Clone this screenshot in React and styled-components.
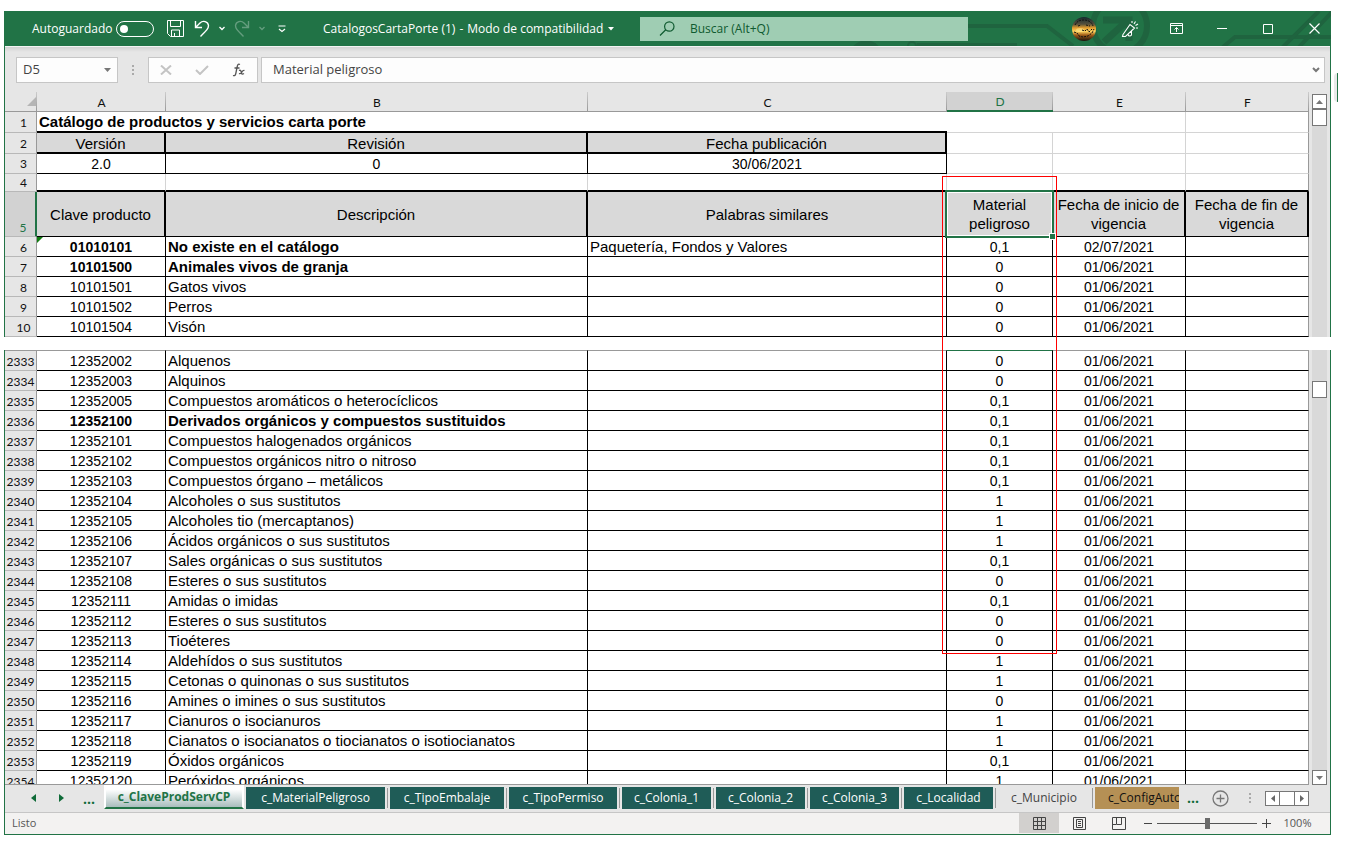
import React from "react";
import styled, { createGlobalStyle, css } from "styled-components";

const green = "#217346";
const uiFont = '"Open Sans", "Noto Sans", sans-serif';
const cellFont = '"Liberation Sans", Arial, sans-serif';
const headFont = 'Lato, "Open Sans", sans-serif';

const GlobalStyle = createGlobalStyle`
  *, *::before, *::after { box-sizing: border-box; }
  body { margin: 0; background: #fff; font-family: ${uiFont}; }
  button, input { font: inherit; color: inherit; }
  button { border: 0; padding: 0; background: none; display: inline-flex; align-items: center; justify-content: center; }
  svg { display: block; flex: none; }
`;

const Page = styled.div`
  height: 100vh;
  min-height: 600px;
  min-width: 1180px;
  padding: 11px 18px 15px 4px;
  display: flex;
`;

const Shell = styled.div`
  position: relative;
  flex: 1;
  min-width: 0;
  display: flex;
  flex-direction: column;
  gap: 13px;
`;

const UpperPart = styled.section`
  flex: none;
  border: solid ${green};
  border-width: 0 1px;
  background: #e6e6e6;
`;

const LowerPart = styled.section`
  flex: 1;
  min-height: 0;
  display: flex;
  flex-direction: column;
  border: solid ${green};
  border-width: 0 1px 1px;
  background: #e6e6e6;
`;

/* ---------- title bar ---------- */

const TitleBar = styled.header`
  position: relative;
  display: flex;
  align-items: center;
  height: 35px;
  margin: 0 -1px;
  background: ${green};
  color: #fff;
  font-size: 12px;
  line-height: 16px;
`;

const TitlePattern = styled.svg`
  position: absolute;
  right: 0;
  top: 0;
`;

const QuickAccess = styled.div`
  display: flex;
  align-items: center;
  width: 319px;
  flex: none;
  padding-left: 28px;
`;

const AutoSave = styled.label`
  display: flex;
  align-items: center;
  gap: 4px;
  margin-right: 11px;
`;

const Switch = styled.input`
  appearance: none;
  margin: 0;
  width: 38px;
  height: 16px;
  border: 1px solid #fff;
  border-radius: 8px;
  display: flex;
  align-items: center;
  padding-left: 3px;
  &::before {
    content: "";
    width: 8px;
    height: 8px;
    border-radius: 50%;
    background: #fff;
  }
`;

const QuickButton = styled.button`
  width: ${(p) => p.$w}px;
  height: 24px;
  opacity: ${(p) => (p.disabled ? 0.3 : 1)};
`;

const FileName = styled.div`
  display: flex;
  align-items: center;
  gap: 4px;
  width: 317px;
  flex: none;
  white-space: nowrap;
`;

const Search = styled.label`
  display: flex;
  align-items: center;
  position: relative;
  flex: 0 1 328px;
  height: 24px;
  padding-left: 19px;
  gap: 14px;
  background: #9fcdb3;
  color: #0f5a30;
`;

const SearchInput = styled.input`
  flex: 1;
  min-width: 0;
  border: 0;
  padding: 0;
  background: transparent;
  outline: 0;
  &::placeholder { color: #0f5a30; opacity: 1; }
`;

const WindowButtons = styled.div`
  display: flex;
  gap: 12px;
  margin-left: auto;
  position: relative;
`;

const WindowButton = styled.button`
  width: 34px;
  height: 34px;
`;

/* ---------- formula bar ---------- */

const FormulaBar = styled.div`
  display: flex;
  height: 46px;
  padding: 10px 5px 9px 11px;
  border-top: 1px solid #f3f3f3;
  background: linear-gradient(#d2d2d2, #e6e6e6 5px);
  color: #444;
  font-size: 13px;
`;

const Box = styled.div`
  display: flex;
  align-items: center;
  height: 26px;
  border: 1px solid #c6c6c6;
  background: #fdfdfd;
`;

const NameBox = styled(Box)`
  width: 102px;
  padding: 0 6px;
`;

const Grip = styled.span`
  width: 30px;
  display: flex;
  align-items: center;
  justify-content: center;
  height: 26px;
`;

const EntryButtons = styled(Box)`
  width: 110px;
  margin-right: 3px;
  justify-content: space-around;
`;

const FormulaBox = styled(Box)`
  flex: 1;
  padding: 0 4px 0 11px;
`;

const PlainInput = styled.input`
  flex: 1;
  width: 40px;
  min-width: 0;
  border: 0;
  padding: 0 0 2px;
  outline: 0;
  background: transparent;
`;

/* ---------- sheet ---------- */

const Pane = styled.div`
  display: flex;
  min-height: 0;
  ${(p) =>
    p.$fill &&
    css`
      flex: 1;
    `}
`;

const GridArea = styled.div`
  flex: 1;
  min-width: 0;
  overflow: ${(p) => (p.$clip ? "hidden" : "visible")};
  border-bottom: ${(p) => (p.$clip ? "1px solid #999" : "0")};
`;

const Sheet = styled.table`
  width: 100%;
  table-layout: fixed;
  border-collapse: separate;
  border-spacing: 0;
  background: #fff;
  color: #000;
`;

const Row = styled.tr`
  height: ${(p) => p.$h || 20}px;
`;

const ColumnHead = styled.th`
  height: 20px;
  padding: 2px 0 0;
  font: 12px/16px ${headFont};
  color: ${(p) => (p.$selected ? green : "#111")};
  border-bottom: ${(p) => (p.$selected ? `2px solid ${green}` : "1px solid #999")};
  background: linear-gradient(#ccc, #999) right / 1px 100% no-repeat
    ${(p) => (p.$selected ? "#d2d2d2" : "#e6e6e6")};
`;

const SelectAll = styled(ColumnHead)`
  padding: 0;
  & > svg { margin: 0 1px 0 auto; }
`;

const RowHead = styled.th`
  padding: 0 0 0 ${(p) => (p.$wide ? 0 : 6)}px;
  font: 12px/17px ${headFont};
  line-height: ${(p) => (p.$tall ? 19 : 17)}px;
  text-align: center;
  vertical-align: bottom;
  color: ${(p) => (p.$selected ? green : "#111")};
  background: ${(p) => (p.$selected ? "#d2d2d2" : "#e6e6e6")};
  border-bottom: 1px solid #b8b8b8;
  border-right: ${(p) => (p.$selected ? `2px solid ${green}` : "1px solid #999")};
  ${(p) => p.$first && "border-top: 1px solid #999;"}
`;

const lineStyles = {
  thin: "1px solid #000",
  thick: "2px solid #000",
  grid: "1px solid #d4d4d4",
  edge: "1px solid #999",
  none: "0",
};

const Cell = styled.td`
  position: relative;
  padding: ${(p) => (p.$num ? 1 : 0)}px 2px 0;
  font-family: ${cellFont};
  font-size: ${(p) => (p.$num ? 14 : 15)}px;
  line-height: ${(p) => (p.$num ? 18 : 19)}px;
  font-weight: ${(p) => (p.$bold ? 700 : 400)};
  text-align: ${(p) => (p.$left ? "left" : "center")};
  white-space: ${(p) => (p.$wrap ? "normal" : "nowrap")};
  background: ${(p) => (p.$shade ? "#d9d9d9" : "#fff")};
  border-right: ${(p) => lineStyles[p.$r || "thin"]};
  border-bottom: ${(p) => lineStyles[p.$b || "thin"]};
  ${(p) => p.$first && `border-top: 1px solid ${p.$first};`}
`;

const VersionHead = styled(Cell)`
  padding-top: 2px;
  line-height: 17px;
`;

const SelectionFrame = styled.span`
  position: absolute;
  inset: -2px;
  z-index: 1;
  border: 2px solid ${green};
  box-shadow: inset 0 0 0 1px #fff;
  &::after {
    content: "";
    position: absolute;
    right: -4px;
    bottom: -4px;
    width: 7px;
    height: 7px;
    border: 1px solid #fff;
    background: ${green};
  }
`;

const ErrorMark = styled.span`
  position: absolute;
  left: 0;
  top: 0;
  border-top: 6px solid #107c10;
  border-right: 6px solid transparent;
`;

const Highlight = styled.div`
  position: absolute;
  z-index: 2;
  top: 165px;
  right: 274px;
  width: 115px;
  height: 478px;
  border: 1px solid #f00;
  pointer-events: none;
`;

const EdgeMark = styled.div`
  position: absolute;
  right: -7px;
  top: 62px;
  width: 4px;
  height: 29px;
  border-right: 1px solid ${green};
  border-radius: 4px 0 0 4px;
  background: #e9e9e9;
`;

const ScrollColumn = styled.div`
  width: 21px;
  padding: ${(p) => p.$top}px 3px 0;
  display: flex;
  flex-direction: column;
`;

const Track = styled.div`
  flex: 1;
  background: #d9d9d9;
  padding-top: ${(p) => p.$top || 0}px;
`;

const Thumb = styled.div`
  width: 15px;
  height: 17px;
  border: 1px solid #777;
  background: #fff;
`;

const ScrollButton = styled.button`
  width: 15px;
  height: 15px;
  border: 1px solid #777;
  background: #fff;
  flex: none;
`;

/* ---------- sheet tabs ---------- */

const TabBar = styled.nav`
  flex: none;
  height: 28px;
  display: flex;
  align-items: flex-start;
  border-bottom: 1px solid #c6c6c6;
  color: #0f6b38;
  font-size: 12px;
`;

const TabArrows = styled.div`
  display: flex;
  align-items: center;
  width: 99px;
  height: 26px;
  padding-left: 14px;
`;

const TabArrow = styled.button`
  width: 28px;
  height: 20px;
`;

const MoreTabs = styled.button`
  width: 28px;
  height: 24px;
  font-size: 14px;
  font-weight: 700;
`;

const ActiveTab = styled.button`
  width: 140px;
  height: 24px;
  margin-right: 2px;
  border: 2px solid #fff;
  border-top: 0;
  border-bottom: 2px solid ${green};
  background: linear-gradient(#fff 20%, #a9bdbd);
  color: ${green};
  font-weight: 700;
`;

const Tab = styled.button`
  width: ${(p) => p.$w}px;
  height: 22px;
  margin-top: 2px;
  padding-bottom: 2px;
  background: ${(p) => p.$bg || "#1f5c57"};
  color: ${(p) => p.$fg || "#fff"};
  white-space: nowrap;
  overflow: hidden;
  flex: none;
  ${(p) => p.$cut && "justify-content: flex-start; padding-left: 13px;"}
`;

const TabRule = styled.span`
  width: 1px;
  height: 20px;
  margin: 3px 2px 0;
  background: #999;
`;

const TabTools = styled.div`
  margin-left: auto;
  margin-right: 21px;
  display: flex;
  align-items: center;
  height: 26px;
`;

const AddSheet = styled.button`
  width: 20px;
  height: 20px;
  margin-right: 5px;
`;

const HScroll = styled.div`
  display: flex;
  & > * + * { margin-left: -1px; }
`;

const HThumb = styled.div`
  width: 16px;
  height: 15px;
  border: 1px solid #777;
  background: #fff;
`;

/* ---------- status bar ---------- */

const StatusBar = styled.footer`
  flex: none;
  height: 21px;
  display: flex;
  align-items: center;
  padding: 0 0 1px 7px;
  background: #f3f2f1;
  color: #555;
  font-size: 11px;
`;

const StatusText = styled.span`
  padding-bottom: 1px;
`;

const ViewButtons = styled.div`
  display: flex;
  margin-left: auto;
`;

const ViewButton = styled.button`
  width: 40px;
  height: 20px;
  background: ${(p) => (p.$on ? "#d2d0ce" : "transparent")};
`;

const ZoomButton = styled.button`
  width: 18px;
  height: 20px;
`;

const ZoomSlider = styled.input`
  appearance: none;
  width: 100px;
  height: 16px;
  margin: 0;
  background: linear-gradient(#555, #555) center / 100% 1px no-repeat;
  &::-webkit-slider-thumb {
    appearance: none;
    width: 5px;
    height: 11px;
    background: #6b6b6b;
  }
`;

const ZoomValue = styled.button`
  width: 55px;
  height: 20px;
  padding: 0 10px 1px 0;
`;

/* ---------- small drawings ---------- */

const Line = ({ w = 16, h = 16, d, color = "currentColor", sw = 1, ...rest }) => (
  <svg width={w} height={h} viewBox={`0 0 ${w} ${h}`} fill="none" stroke={color} strokeWidth={sw} {...rest}>
    <path d={d} />
  </svg>
);

const Solid = ({ w, h, d, color = "currentColor" }) => (
  <svg width={w} height={h} viewBox={`0 0 ${w} ${h}`} fill={color}>
    <path d={d} />
  </svg>
);

const Dots = () => (
  <svg width="2" height="11" fill="#aaa">
    <rect width="2" height="2" y="0" />
    <rect width="2" height="2" y="4" />
    <rect width="2" height="2" y="8" />
  </svg>
);

const Avatar = () => (
  <svg width="24" height="24" viewBox="0 0 24 24">
    <defs>
      <linearGradient id="sunset" x1="0" y1="0" x2="0" y2="1">
        <stop offset="0" stopColor="#14282f" />
        <stop offset="0.3" stopColor="#55503c" />
        <stop offset="0.45" stopColor="#e09a2c" />
        <stop offset="0.6" stopColor="#ffd460" />
        <stop offset="0.75" stopColor="#a05c18" />
        <stop offset="1" stopColor="#17100c" />
      </linearGradient>
    </defs>
    <circle cx="12" cy="12" r="12" fill="url(#sunset)" />
    <ellipse cx="8" cy="13" rx="4" ry="2" fill="#ffef9a" opacity="0.5" />
    <path
      d="M3 8c2-4 5-5 9-5s8 2 9 6M2 15l3 1 2 3 4 1 5-1 4-3 2-4M6 9l3-1M14 8l4 1M10 13l3 1 2-2 2 3 3-3"
      stroke="#111"
      strokeDasharray="2 1"
      fill="none"
    />
  </svg>
);

const Backdrop = () => (
  <TitlePattern width="480" height="35" viewBox="0 0 480 35" fill="none" stroke="#1f643f" strokeWidth="4" aria-hidden="true">
    <circle cx="15" cy="47" r="15" strokeWidth="5" />
    <path d="M7 34h18" />
    <circle cx="61" cy="35" r="4" strokeWidth="2" />
    <path d="M66 34h100" />
    <path d="M100 15h96l26 20" />
    <circle cx="269" cy="15" r="27" strokeWidth="6" />
    <path d="M252 9h26v21M277 9l-24 22" strokeWidth="7" />
    <path d="M372 36l12-10h98" />
    <path d="M432 36l36-36M448 36l34-36" />
  </TitlePattern>
);

/* ---------- data ---------- */

const columns = ["A", "B", "C", "D", "E", "F"];

const topRows = [
  [6, "01010101", "No existe en el catálogo", "Paquetería, Fondos y Valores", "0,1", "02/07/2021", true],
  [7, "10101500", "Animales vivos de granja", "", "0", "01/06/2021", true],
  [8, "10101501", "Gatos vivos", "", "0", "01/06/2021"],
  [9, "10101502", "Perros", "", "0", "01/06/2021"],
  [10, "10101504", "Visón", "", "0", "01/06/2021"],
];

const lowerRows = [
  ["12352002", "Alquenos", "0"],
  ["12352003", "Alquinos", "0"],
  ["12352005", "Compuestos aromáticos o heterocíclicos", "0,1"],
  ["12352100", "Derivados orgánicos y compuestos sustituidos", "0,1", true],
  ["12352101", "Compuestos halogenados orgánicos", "0,1"],
  ["12352102", "Compuestos orgánicos nitro o nitroso", "0,1"],
  ["12352103", "Compuestos órgano – metálicos", "0,1"],
  ["12352104", "Alcoholes o sus sustitutos", "1"],
  ["12352105", "Alcoholes tio (mercaptanos)", "1"],
  ["12352106", "Ácidos orgánicos o sus sustitutos", "1"],
  ["12352107", "Sales orgánicas o sus sustitutos", "0,1"],
  ["12352108", "Esteres o sus sustitutos", "0"],
  ["12352111", "Amidas o imidas", "0,1"],
  ["12352112", "Esteres o sus sustitutos", "0"],
  ["12352113", "Tioéteres", "0"],
  ["12352114", "Aldehídos o sus sustitutos", "1"],
  ["12352115", "Cetonas o quinonas o sus sustitutos", "1"],
  ["12352116", "Amines o imines o sus sustitutos", "0"],
  ["12352117", "Cianuros o isocianuros", "1"],
  ["12352118", "Cianatos o isocianatos o tiocianatos o isotiocianatos", "1"],
  ["12352119", "Óxidos orgánicos", "0,1"],
  ["12352120", "Peróxidos orgánicos", "1"],
].map(([code, text, risk, bold], i) => [2333 + i, code, text, "", risk, "01/06/2021", bold]);

const tabs = [
  ["c_MaterialPeligroso", 139],
  ["c_TipoEmbalaje", 114],
  ["c_TipoPermiso", 108],
  ["c_Colonia_1", 89],
  ["c_Colonia_2", 89],
  ["c_Colonia_3", 89],
  ["c_Localidad", 89],
];

const Column = styled.col`
  width: ${(p) => (p.$w ? `${p.$w}px` : "auto")};
`;

const Columns = () => (
  <colgroup>
    <Column $w={32} />
    <Column $w={129} />
    <Column />
    <Column $w={359} />
    <Column $w={106} />
    <Column $w={133} />
    <Column $w={123} />
  </colgroup>
);

const DataRow = ({ row, first }) => {
  const [n, code, text, similar, risk, date, bold] = row;
  const top = first ? "#999" : undefined;
  return (
    <Row $h={first ? 21 : 20}>
      <RowHead scope="row" $wide={n > 999} $first={first}>{n}</RowHead>
      <Cell $num $bold={bold} $first={top}>
        {n === 6 && <ErrorMark />}
        {code}
      </Cell>
      <Cell $left $bold={bold} $first={top}>{text}</Cell>
      <Cell $left $first={top}>{similar}</Cell>
      <Cell $num $first={first ? green : undefined}>{risk}</Cell>
      <Cell $num $first={top}>{date}</Cell>
      <Cell $r="edge" $first={top} />
    </Row>
  );
};

export default function App() {
  return (
    <Page>
      <GlobalStyle />
      <Shell>
        <UpperPart>
          <TitleBar>
            <Backdrop />
            <QuickAccess>
              <AutoSave>
                Autoguardado
                <Switch type="checkbox" role="switch" />
              </AutoSave>
              <QuickButton $w={20} aria-label="Guardar">
                <Line w={17} h={17} d="M.5.5h16v16h-13l-3-3zM3.5.5v6h10v-6M4.500 16v-6h8v6M7.500 16v-3" />
              </QuickButton>
              <QuickButton $w={34} aria-label="Deshacer">
                <Line w={16} h={18} sw={1.4} d="M1.500 1v6.500h6.500M1.500 7.500L6 3c3-3 8-1.500 8.500 2.500c0 3-1.500 4.500-8 11" />
              </QuickButton>
              <Line w={6} h={5} d="M.5 1l2.500 2.500L5.500 1" sw={1.3} />
              <QuickButton $w={34} disabled aria-label="Rehacer">
                <Line w={16} h={18} sw={1.4} d="M14.500 1v6.500h-6.500M14.500 7.500L10 3c-3-3-8-1.500-8.500 2.500c0 3 1.500 4.500 8 11" />
              </QuickButton>
              <Line w={6} h={5} d="M.5 1l2.500 2.500L5.500 1" sw={1.3} opacity="0.3" />
              <QuickButton $w={34} aria-label="Personalizar barra">
                <Line w={8} h={8} sw={1.2} d="M.5 1h7M1 4l3 2.500L7 4" />
              </QuickButton>
            </QuickAccess>
            <FileName>
              <span>CatalogosCartaPorte (1)</span>
              <span>-</span>
              <span>Modo de compatibilidad</span>
              <QuickButton $w={8} aria-label="Opciones del archivo">
                <Solid w={6} h={4} d="M0 0h6L3 3.500z" />
              </QuickButton>
            </FileName>
            <Search>
              <Line w={17} h={16} sw={1.2} d="M6.500 9L1 14.500M15 5.500a4.700 4.700 0 1 1-9.400 0a4.700 4.700 0 1 1 9.400 0" />
              <SearchInput type="text" placeholder="Buscar (Alt+Q)" aria-label="Buscar" />
            </Search>
            <WindowButtons>
              <WindowButton aria-label="Cuenta"><Avatar /></WindowButton>
              <WindowButton aria-label="Novedades">
                <Line w={18} h={18} sw={1.1} d="M2 14.500L9 4.500L13.500 8L4.500 16.500H1.500zM7 14.500c.5 2 2.500 2 3.500.5v-4M11 1v2M14.500 1.500l-1.500 2.500M17 4l-2.500 1.500M17 8h-2" />
              </WindowButton>
              <WindowButton aria-label="Opciones de presentación de la cinta">
                <Line w={13} h={11} d="M.5.5h12v10H.5zM.5 2.500h12M6.500 9V4.500M4.500 6.500l2-2l2 2" />
              </WindowButton>
              <WindowButton aria-label="Minimizar"><Line w={10} h={10} d="M0 4.500h10" /></WindowButton>
              <WindowButton aria-label="Maximizar"><Line w={10} h={10} d="M.5.5h9v9h-9z" /></WindowButton>
              <WindowButton aria-label="Cerrar"><Line w={11} h={11} sw={1.2} d="M.5.5l10 10M10.500.5l-10 10" /></WindowButton>
            </WindowButtons>
          </TitleBar>

          <FormulaBar>
            <NameBox>
              <PlainInput defaultValue="D5" aria-label="Cuadro de nombres" />
              <button aria-label="Nombres definidos"><Solid w={7} h={4} d="M0 0h7L3.500 4z" color="#777" /></button>
            </NameBox>
            <Grip><Dots /></Grip>
            <EntryButtons>
              <button aria-label="Cancelar"><Line w={12} h={10} sw={2} color="#c4c4c4" d="M1 .5l10 9M11 .5L1 9.500" /></button>
              <button aria-label="Introducir"><Line w={14} h={10} sw={2} color="#c4c4c4" d="M1 5l4 4L13 1" /></button>
              <button aria-label="Insertar función">
                <Line w={14} h={14} sw={1.3} color="#555" d="M8 1.500c-2-1-2.500.5-3 3l-1.200 6c-.4 2-1.300 2.500-2.800 2M2.500 5h5M7 7.500c2-1 2 1 2.500 2.500s1 1.500 2.500.5M12.500 7.500c-1.500-.5-2 .5-3 2s-1.500 1.500-2.500 1" />
              </button>
            </EntryButtons>
            <FormulaBox>
              <PlainInput defaultValue="Material peligroso" aria-label="Barra de fórmulas" />
              <button aria-label="Expandir barra"><Line w={8} h={6} sw={2} color="#777" d="M1 1l3 3l3-3" /></button>
            </FormulaBox>
          </FormulaBar>

          <Pane>
            <GridArea>
              <Sheet>
                <Columns />
                <thead>
                  <tr>
                    <SelectAll aria-label="Seleccionar todo"><Solid w={9} h={9} d="M9 0v9H0z" color="#b5b5b5" /></SelectAll>
                    {columns.map((c) => (
                      <ColumnHead key={c} scope="col" $selected={c === "D"}>{c}</ColumnHead>
                    ))}
                  </tr>
                </thead>
                <tbody>
                  <Row $h={21}>
                    <RowHead scope="row" $tall>1</RowHead>
                    <Cell colSpan={3} $left $bold $b="thick" $r="none">
                      Catálogo de productos y servicios carta porte
                    </Cell>
                    <Cell colSpan={2} $r="grid" $b="grid" />
                    <Cell $r="edge" $b="grid" />
                  </Row>
                  <Row $h={21}>
                    <RowHead scope="row" $tall>2</RowHead>
                    <VersionHead $shade $r="thick" $b="thick">Versión</VersionHead>
                    <VersionHead $shade $r="thick" $b="thick">Revisión</VersionHead>
                    <VersionHead $shade $r="thick" $b="thick">Fecha publicación</VersionHead>
                    <Cell $r="grid" $b="grid" />
                    <Cell $r="grid" $b="grid" />
                    <Cell $r="edge" $b="grid" />
                  </Row>
                  <Row>
                    <RowHead scope="row" $tall>3</RowHead>
                    <Cell $num>2.0</Cell>
                    <Cell $num>0</Cell>
                    <Cell $num>30/06/2021</Cell>
                    <Cell $r="grid" $b="grid" />
                    <Cell $r="grid" $b="grid" />
                    <Cell $r="edge" $b="grid" />
                  </Row>
                  <Row $h={18}>
                    <RowHead scope="row">4</RowHead>
                    {columns.map((c) => (
                      <Cell key={c} $r={c === "F" ? "edge" : "grid"} $b="thick" />
                    ))}
                  </Row>
                  <Row $h={45}>
                    <RowHead scope="row" $selected>5</RowHead>
                    <Cell $shade $r="thick">Clave producto</Cell>
                    <Cell $shade $r="thick">Descripción</Cell>
                    <Cell $shade>Palabras similares</Cell>
                    <Cell $shade $wrap>
                      Material peligroso
                      <SelectionFrame />
                    </Cell>
                    <Cell $shade $wrap $r="thick">Fecha de inicio de vigencia</Cell>
                    <Cell $shade $wrap $r="thick">Fecha de fin de vigencia</Cell>
                  </Row>
                  {topRows.map((r) => <DataRow key={r[0]} row={r} />)}
                </tbody>
              </Sheet>
            </GridArea>
            <ScrollColumn $top={2}>
              <ScrollButton aria-label="Subir"><Solid w={7} h={4} d="M0 4h7L3.500 0z" color="#777" /></ScrollButton>
              <Thumb />
              <Track />
            </ScrollColumn>
          </Pane>
        </UpperPart>

        <LowerPart>
          <Pane $fill>
            <GridArea $clip>
              <Sheet>
                <Columns />
                <tbody>
                  {lowerRows.map((r, i) => <DataRow key={r[0]} row={r} first={i === 0} />)}
                </tbody>
              </Sheet>
            </GridArea>
            <ScrollColumn $top={0}>
              <Track $top={31}><Thumb /></Track>
              <ScrollButton aria-label="Bajar"><Solid w={7} h={4} d="M0 0h7L3.500 4z" color="#777" /></ScrollButton>
            </ScrollColumn>
          </Pane>

          <TabBar aria-label="Hojas">
            <TabArrows>
              <TabArrow aria-label="Hoja anterior"><Solid w={5} h={8} d="M5 0v8L0 4z" /></TabArrow>
              <TabArrow aria-label="Hoja siguiente"><Solid w={5} h={8} d="M0 0v8l5-4z" /></TabArrow>
              <MoreTabs aria-label="Más hojas a la izquierda">...</MoreTabs>
            </TabArrows>
            <ActiveTab>c_ClaveProdServCP</ActiveTab>
            {tabs.map(([name, w]) => (
              <React.Fragment key={name}>
                <Tab $w={w}>{name}</Tab>
                <TabRule />
              </React.Fragment>
            ))}
            <Tab $w={92} $bg="transparent" $fg="#444">c_Municipio</Tab>
            <TabRule />
            <Tab $w={84} $bg="#b59055" $fg="#111" $cut>c_ConfigAuto</Tab>
            <MoreTabs aria-label="Más hojas a la derecha">...</MoreTabs>
            <TabTools>
              <AddSheet aria-label="Hoja nueva">
                <Line w={17} h={17} color="#777" d="M16 8.500a7.500 7.500 0 1 1-15 0a7.500 7.500 0 1 1 15 0M8.500 4.500v8M4.500 8.500h8" sw={1.3} />
              </AddSheet>
              <Grip><Dots /></Grip>
              <HScroll>
                <ScrollButton aria-label="Izquierda"><Solid w={4} h={7} d="M4 0v7L0 3.500z" color="#666" /></ScrollButton>
                <HThumb />
                <ScrollButton aria-label="Derecha"><Solid w={4} h={7} d="M0 0v7l4-3.500z" color="#666" /></ScrollButton>
              </HScroll>
            </TabTools>
          </TabBar>

          <StatusBar>
            <StatusText>Listo</StatusText>
            <ViewButtons>
              <ViewButton $on aria-label="Normal">
                <Line w={13} h={13} color="#444" d="M.5.5h12v12H.5zM.5 4.500h12M.5 8.500h12M4.500.5v12M8.500.5v12" />
              </ViewButton>
              <ViewButton aria-label="Diseño de página">
                <Line w={13} h={13} color="#444" d="M.5.5h12v12H.5zM3.500 2.500h6v8h-6zM5 4.500h3M5 6.500h3M5 8.500h3" />
              </ViewButton>
              <ViewButton aria-label="Vista previa de salto de página">
                <Line w={14} h={13} color="#444" d="M.5.5h13v12H.5zM4.500.5v7h5v-7M0 7.500h4" />
              </ViewButton>
            </ViewButtons>
            <ZoomButton aria-label="Alejar"><Line w={8} h={8} color="#444" d="M0 4.500h8" /></ZoomButton>
            <ZoomSlider type="range" min="0" max="100" defaultValue="50" aria-label="Zoom" />
            <ZoomButton aria-label="Acercar"><Line w={9} h={9} color="#444" d="M0 4.500h9M4.500 0v9" /></ZoomButton>
            <ZoomValue>100%</ZoomValue>
          </StatusBar>
        </LowerPart>

        <Highlight />
        <EdgeMark />
      </Shell>
    </Page>
  );
}
